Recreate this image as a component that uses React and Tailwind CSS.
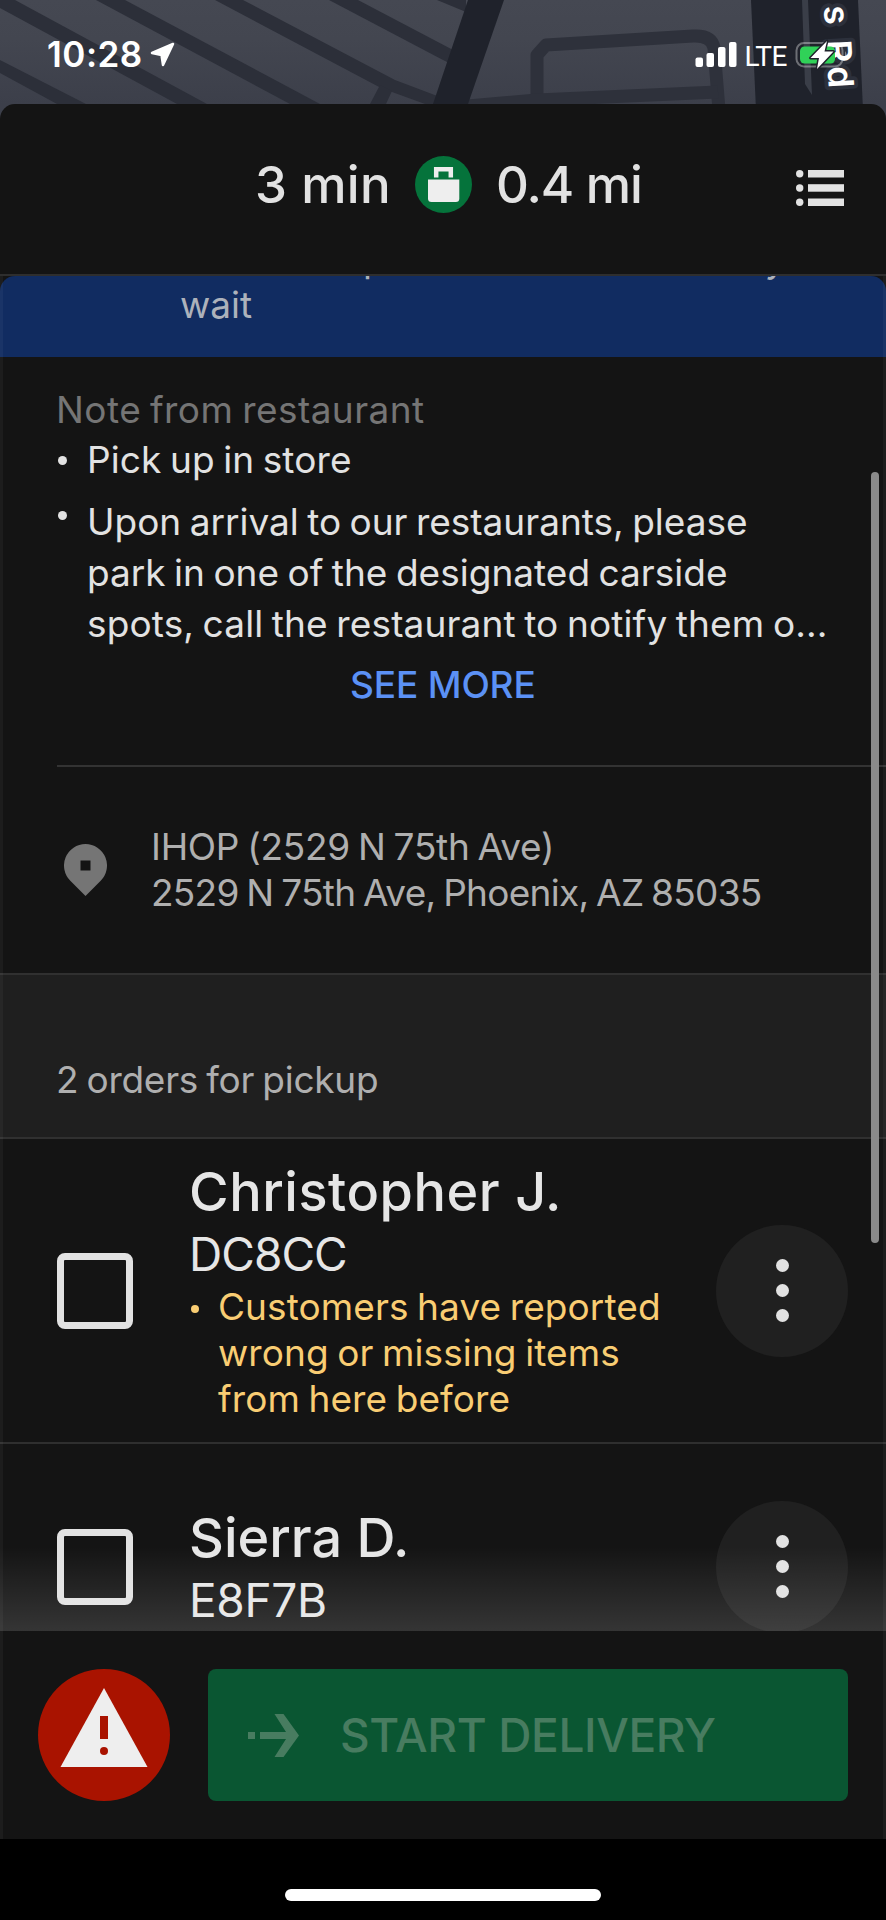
// src/App.jsx
// Courier pickup screen

const orders = [
  {
    id: 'DC8CC',
    name: 'Christopher J.',
    nameClass: 'tracking-[0.54px]',
    idClass: 'tracking-[-0.96px]',
    warning: ['Customers have reported', 'wrong or missing items', 'from here before'],
  },
  {
    id: 'E8F7B',
    name: 'Sierra D.',
    nameClass: 'tracking-[0px] mt-[3px]',
    idClass: 'tracking-[-0.32px]',
  },
];

/**
 * Map strip that shows behind the status bar
 */
const MapStrip = () => (
  <svg className="absolute inset-0" width="886" height="130" viewBox="0 0 886 130">
    <defs>
      <linearGradient id="land" x1="0" y1="0" x2="0" y2="1">
        <stop offset="0" stopColor="#454852" />
        <stop offset="0.3" stopColor="#434650" />
        <stop offset="0.8" stopColor="#3c3f4a" />
      </linearGradient>
    </defs>
    <rect width="886" height="130" fill="url(#land)" />
    <g fill="#2c2f39">
      <path d="M0 60L86 104L100 112H72L57 104L0 73Z" />
      <path d="M0 0H15L207 104L222 112H192L177 104L0 8Z" />
      <path d="M96 0H125L320 104L335 112H305L290 104Z" />
      <path d="M215 0H243L395 80L440 97V110L425 104L381 88Z" />
      <path d="M329 0H358L455 51V66L443 60Z" />
      <path d="M437 0H466V12Z" />
      <path d="M380 85L392 91L386 104H370Z" />
    </g>
    <g fill="none" stroke="#2e313b" strokeWidth="13" strokeLinejoin="round">
      <path d="M537 98V55L546 45L693 36Q712 35 714 48L719 110" />
      <path d="M468 106L537 100L718 92" />
    </g>
    <path d="M468 0H504L468 104H433Z" fill="#1f222b" />
    <path d="M751 0H858L863 110H756Z" fill="#1f222b" />
    <path d="M802 0H808L812 95L805 84Z" fill="#3a3e48" />
    <text
      transform="translate(829 92) rotate(86.5)"
      textAnchor="end"
      fontSize="35"
      letterSpacing="3.5"
      fill="#fff"
      stroke="#2c303b"
      strokeWidth="8"
      strokeLinejoin="round"
      paintOrder="stroke"
      className="font-['Inter',sans-serif] font-semibold"
    >
      s Rd
    </text>
  </svg>
);

const StatusBar = () => (
  <div className="relative flex h-[104px] items-start pt-[34px] pl-[47px]">
    <span className="text-[35px] leading-[40px] font-semibold tracking-[0.5px] text-white">10:28</span>
    <svg className="mt-[8px] ml-[7px]" width="25" height="26" viewBox="0 0 25 26" fill="#fff">
      <path
        d="M23 2L2 11L11.500 13L13 23Z"
        stroke="#fff"
        strokeWidth="2.500"
        strokeLinejoin="round"
      />
    </svg>
    <svg className="mt-[8px] ml-auto" width="42" height="26" viewBox="0 0 42 26" fill="#fff">
      <rect x="0.500" y="15.500" width="7.500" height="9.500" rx="2" />
      <rect x="11.500" y="11" width="7.500" height="14" rx="2" />
      <rect x="23" y="5" width="7.500" height="20" rx="2" />
      <rect x="34" y="0" width="7.500" height="25" rx="2" />
    </svg>
    <span className="ml-[8px] text-[28px] leading-[46px] tracking-[-0.5px] text-white font-['Roboto',sans-serif]">LTE</span>
    <svg className="mt-[5px] mr-[37px] ml-[8px]" width="54" height="32" viewBox="0 0 54 32">
      <rect x="1.500" y="4" width="46" height="23.500" rx="7.500" fill="none" stroke="#fff" strokeOpacity="0.35" strokeWidth="2" />
      <path d="M50 12Q53 15.500 50 19.500Z" fill="#fff" fillOpacity="0.4" />
      <rect x="5" y="7.500" width="35" height="17" rx="4.500" fill="#30d158" />
      <path
        d="M32 2L15.500 19H24L22 30L38.500 12.500H29.500Z"
        fill="#fff"
        stroke="#1f222b"
        strokeWidth="3"
        strokeLinejoin="round"
        paintOrder="stroke"
      />
    </svg>
  </div>
);

const TripHeader = () => (
  <header className="flex h-[172px] items-center rounded-t-[15px] border-b-2 border-[#2e2e2e] bg-[#141414] pb-[9px] text-[51px] leading-[60px] font-medium text-[#e2e2e2]">
    <span className="ml-[255px] w-[160px] tracking-[0.3px] whitespace-nowrap">3 min</span>
    <svg width="57" height="57" viewBox="0 0 57 57">
      <circle cx="28.500" cy="28.500" r="28.500" fill="#05733b" />
      <path d="M21.200 21.500V13.200H35.800V21.500" fill="none" stroke="#eee" strokeWidth="4.500" />
      <path d="M13 23.500H44.300V42.500Q44.300 46 40.800 46H16.500Q13 46 13 42.500Z" fill="#eee" />
    </svg>
    <span className="ml-[24px] tracking-[-1.08px] whitespace-nowrap">0.4 mi</span>
    <svg className="mt-[7px] mr-[42px] ml-auto" width="48" height="36" viewBox="0 0 48 36" fill="#e2e2e2">
      <circle cx="3.700" cy="3.800" r="3.700" />
      <circle cx="3.700" cy="18" r="3.700" />
      <circle cx="3.700" cy="32.200" r="3.700" />
      <rect x="12" y="0" width="36" height="7.500" />
      <rect x="12" y="14.200" width="36" height="7.500" />
      <rect x="12" y="28.500" width="36" height="7.500" />
    </svg>
  </header>
);

const WaitBanner = () => (
  <div className="h-[81px] overflow-hidden rounded-t-[15px] bg-[#112c61] text-[37px] text-[#adb2bb]">
    {/* line that is scrolled under the header */}
    <div className="-mt-[40px] flex h-[46px] leading-[46px]">
      <span className="ml-[363px]">p</span>
      <span className="ml-[379px]">y</span>
    </div>
    <p className="pl-[180px] leading-[46px]">wait</p>
  </div>
);

const RestaurantNote = () => (
  <section className="h-[408px] pt-[28px] pl-[55px] text-[37px] whitespace-nowrap text-[#e2e2e2] [word-spacing:-2px]">
    <h2 className="pl-[1px] leading-[50px] tracking-[0.44px] text-[#757575]">Note from restaurant</h2>
    <ul>
      <li className="flex leading-[50px]">
        <span className="mt-[21px] ml-[3px] size-[9px] rounded-full bg-[#e2e2e2]" />
        <span className="ml-[20px] tracking-[0.1px]">Pick up in store</span>
      </li>
      <li className="mt-[11px] flex leading-[51px]">
        <span className="mt-[15px] ml-[3px] size-[9px] rounded-full bg-[#e2e2e2]" />
        <p className="ml-[20px]">
          <span className="block">Upon arrival to our restaurants, please</span>
          <span className="block tracking-[0.02px]">park in one of the designated carside</span>
          <span className="block tracking-[0.13px]">spots, call the restaurant to notify them o...</span>
        </p>
      </li>
    </ul>
    <button className="mt-[11px] block pl-[295px] leading-[50px] font-medium tracking-[-0.15px] text-[#5b91f5] [word-spacing:0px]">SEE MORE</button>
  </section>
);

const Address = () => (
  <section className="ml-[57px] flex h-[208px] items-center border-t-2 border-[#333] text-[37px] leading-[46px] whitespace-nowrap text-[#afafaf] [word-spacing:-2px]">
    <svg className="ml-[7px]" width="43" height="52" viewBox="0 0 43 52">
      <path
        fillRule="evenodd"
        fill="#757575"
        d="M21.500 0A21.500 21.500 0 0 1 36.700 36.700L21.500 52L6.300 36.700A21.500 21.500 0 0 1 21.500 0ZM16.500 16.500V26.500H26.500V16.500Z"
      />
    </svg>
    <p className="ml-[44px]">
      <span className="block tracking-[-0.3px]">IHOP (2529 N 75th Ave)</span>
      <span className="block tracking-[-0.72px]">2529 N 75th Ave, Phoenix, AZ 85035</span>
    </p>
  </section>
);

const OrderRow = ({ order }) => (
  <li className="flex h-[305px] items-center border-b-2 border-[#2f2f2f] pl-[57px] last:h-[245px] last:border-b-0">
    <span className="size-[76px] shrink-0 rounded-[8px] border-[7px] border-[#e2e2e2]" />
    <div className="ml-[56px] w-[527px] whitespace-nowrap text-[#e6e6e6]">
      <h3 className={`text-[54px] leading-[64px] font-medium ${order.nameClass}`}>{order.name}</h3>
      <p className={`text-[46px] leading-[60px] ${order.idClass}`}>{order.id}</p>
      {order.warning && (
        <div className="flex text-[37px] leading-[46px] text-[#f9cd73] [word-spacing:-2px]">
          <span className="mt-[21px] ml-[2px] size-[8px] rounded-full bg-[#f9cd73]" />
          <p className="ml-[19px]">
            {order.warning.map((line) => (
              <span key={line} className="block tracking-[0.09px]">{line}</span>
            ))}
          </p>
        </div>
      )}
    </div>
    <button className="flex size-[132px] flex-col items-center justify-center gap-[12px] rounded-full bg-[#202020]">
      <span className="size-[13px] rounded-full bg-[#e2e2e2]" />
      <span className="size-[13px] rounded-full bg-[#e2e2e2]" />
      <span className="size-[13px] rounded-full bg-[#e2e2e2]" />
    </button>
  </li>
);

const Footer = () => (
  <footer className="flex h-[208px] items-center gap-[38px] bg-[#141414] px-[38px]">
    <svg width="132" height="132" viewBox="0 0 132 132">
      <circle cx="66" cy="66" r="66" fill="#a91300" />
      <path d="M66 19L109.500 98H22.500Z" fill="#eee" />
      <rect x="62" y="47" width="8" height="23" fill="#a91300" />
      <circle cx="66" cy="82" r="4" fill="#a91300" />
    </svg>
    <button className="flex h-[132px] grow items-center rounded-[8px] bg-[#0a5632] pl-[40px] text-[#487c60]">
      <svg width="51" height="43" viewBox="0 0 51 43" fill="currentColor">
        <rect x="0" y="18" width="7" height="7" />
        <path d="M12 18H38L26.500 0H35.500L51 21.500L35.500 43H26.500L38 25H12Z" />
      </svg>
      <span className="ml-[41px] text-[46px] leading-[60px] font-medium tracking-[-0.38px] whitespace-nowrap">START DELIVERY</span>
    </button>
  </footer>
);

export default function App() {
  return (
    <div className="relative flex h-[1920px] w-[886px] flex-col overflow-hidden bg-black font-['Inter',sans-serif]">
      <MapStrip />
      <StatusBar />
      <div className="relative">
        <TripHeader />

        <main className="relative h-[1355px] overflow-hidden bg-[#141414]">
          <WaitBanner />
          <RestaurantNote />
          <Address />
          <h2 className="h-[166px] border-y-2 border-[#303030] bg-[#1f1f1f] pt-[82px] pl-[56px] text-[37px] leading-[46px] tracking-[-0.26px] text-[#afafaf] [word-spacing:-2px]">
            2 orders for pickup
          </h2>
          <ul>
            {orders.map((order) => (
              <OrderRow key={order.id} order={order} />
            ))}
          </ul>
          {/* Fade above the footer */}
          <div className="absolute inset-x-0 bottom-0 h-[84px] bg-linear-to-t from-white/14 to-transparent" />
          {/* Scroll indicator */}
          <div className="absolute top-[196px] right-[7px] h-[771px] w-[8px] rounded-full bg-[#8a8a8a]" />
        </main>

        <Footer />
        <div className="pointer-events-none absolute inset-x-0 top-[172px] bottom-0 border-x-[3px] border-white/4" />
      </div>
      <div className="flex grow items-center justify-center pt-[31px]">
        <div className="h-[12px] w-[316px] rounded-full bg-white" />
      </div>
    </div>
  );
}
